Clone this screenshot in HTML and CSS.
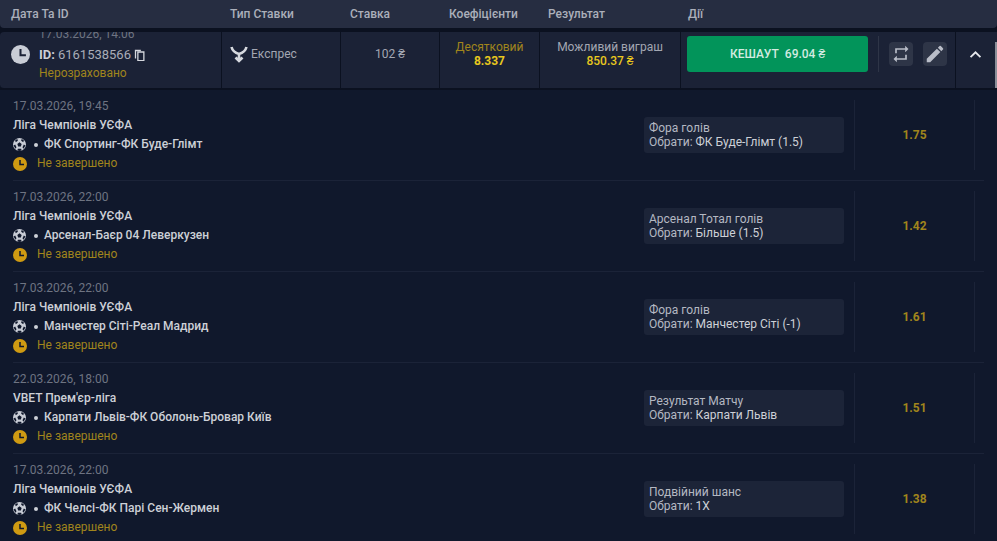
FILE: index.html
```html
<!DOCTYPE html>
<html lang="uk">
<head>
  <meta charset="UTF-8">
  <meta name="viewport" content="width=device-width, initial-scale=1.0">
  <title>Мої ставки</title>
  <link rel="stylesheet" href="styles.css">
</head>
<body>
  <svg class="sprites" width="0" height="0">
    <symbol id="clock" viewBox="0 0 28 28">
      <circle cx="14" cy="14" r="14" fill="currentColor"/>
      <path d="M14 6v9h8" fill="none" stroke="var(--hand)" stroke-width="3"/>
    </symbol>
    <symbol id="ball" viewBox="0 0 24 24">
      <circle cx="12" cy="12" r="12" fill="#c9cdd6"/>
      <path d="M12 8l4 3-1.500 4.500h-5L8 11zM4 4l4-2 1 3-4 3zM20 4l-4-2-1 3 4 3zM1 14l3-2 2.500 5-2 3zM23 14l-3-2-2.500 5 2 3zM9 20h6l1 3-4 1-4-1z" fill="#10182c"/>
    </symbol>
  </svg>

  <header class="table-head">
    <div class="col-date">Дата Та ID</div>
    <div class="col-type">Тип Ставки</div>
    <div class="col-stake">Ставка</div>
    <div class="col-odds">Коефіцієнти</div>
    <div class="col-result">Результат</div>
    <div class="col-actions">Дії</div>
  </header>

  <section class="summary">
    <div class="cell col-date date-cell">
      <svg class="summary-clock"><use href="#clock"/></svg>
      <div class="date-lines">
        <div class="muted">17.03.2026, 14:06</div>
        <div class="bet-id">
          <b>ID:</b> 6161538566
          <svg class="copy" viewBox="0 0 14 14"><path d="M1 1h7v1.500H2.500V11H1z" fill="#d5d8de"/><path d="M4.500 3.500h7v10h-7z" fill="none" stroke="#d5d8de" stroke-width="1.500"/></svg>
        </div>
        <div class="gold">Нерозраховано</div>
      </div>
    </div>
    <div class="cell col-type type-cell">
      <svg class="express" viewBox="0 0 18 18"><path d="M1.500 2c1 4 4 6 7.500 7 3.500-1 6.500-3 7.500-7M9 9v6M5.500 12.500L9 16l3.500-3.500" fill="none" stroke="#d5d8de" stroke-width="2.600"/></svg>
      <span>Експрес</span>
    </div>
    <div class="cell col-stake center muted-light">102 ₴</div>
    <div class="cell col-odds center stack">
      <div class="gold">Десятковий</div>
      <b class="yellow">8.337</b>
    </div>
    <div class="cell col-result center stack">
      <div class="muted-light">Можливий виграш</div>
      <div class="yellow medium">850.37 ₴</div>
    </div>
    <div class="cell col-actions action-cell">
      <button class="cashout">КЕШАУТ&nbsp; 69.04 ₴</button>
      <div class="action-sep"></div>
      <button class="icon-btn">
        <svg class="icon-repeat" viewBox="0 0 24 24"><path d="M7 7h10v3l4-4-4-4v3H5v6h2zM17 17H7v-3l-4 4 4 4v-3h12v-6h-2z" fill="#b9bdc8"/></svg>
      </button>
      <button class="icon-btn">
        <svg class="icon-edit" viewBox="0 0 24 24"><path d="M3 17.250V21h3.750L17.810 9.940l-3.750-3.750zM20.710 7.040a1 1 0 000-1.410l-2.340-2.340a1 1 0 00-1.410 0l-1.830 1.830 3.750 3.750z" fill="#b9bdc8"/></svg>
      </button>
    </div>
    <div class="toggle">
      <svg viewBox="0 0 14 10"><path d="M1.500 8L7 2.500 12.500 8" fill="none" stroke="#e6e8ec" stroke-width="2"/></svg>
    </div>
    <div class="scroll-thumb"></div>
  </section>

  <main class="events">
    <article class="event">
      <div class="event-info">
        <div class="muted">17.03.2026, 19:45</div>
        <div class="league">Ліга Чемпіонів УЄФА</div>
        <div class="match"><svg class="ball"><use href="#ball"/></svg><span class="dot"></span>ФК Спортинг-ФК Буде-Глімт</div>
        <div class="status"><svg class="status-clock"><use href="#clock"/></svg>Не завершено</div>
      </div>
      <div class="pick"><div>Фора голів</div><div>Обрати: <span class="pick-name">ФК Буде-Глімт (1.5)</span></div></div>
      <div class="event-odds">1.75</div>
    </article>
    <article class="event">
      <div class="event-info">
        <div class="muted">17.03.2026, 22:00</div>
        <div class="league">Ліга Чемпіонів УЄФА</div>
        <div class="match"><svg class="ball"><use href="#ball"/></svg><span class="dot"></span>Арсенал-Баєр 04 Леверкузен</div>
        <div class="status"><svg class="status-clock"><use href="#clock"/></svg>Не завершено</div>
      </div>
      <div class="pick"><div>Арсенал Тотал голів</div><div>Обрати: <span class="pick-name">Більше (1.5)</span></div></div>
      <div class="event-odds">1.42</div>
    </article>
    <article class="event">
      <div class="event-info">
        <div class="muted">17.03.2026, 22:00</div>
        <div class="league">Ліга Чемпіонів УЄФА</div>
        <div class="match"><svg class="ball"><use href="#ball"/></svg><span class="dot"></span>Манчестер Сіті-Реал Мадрид</div>
        <div class="status"><svg class="status-clock"><use href="#clock"/></svg>Не завершено</div>
      </div>
      <div class="pick"><div>Фора голів</div><div>Обрати: <span class="pick-name">Манчестер Сіті (-1)</span></div></div>
      <div class="event-odds">1.61</div>
    </article>
    <article class="event">
      <div class="event-info">
        <div class="muted">22.03.2026, 18:00</div>
        <div class="league">VBET Прем'єр-ліга</div>
        <div class="match"><svg class="ball"><use href="#ball"/></svg><span class="dot"></span>Карпати Львів-ФК Оболонь-Бровар Київ</div>
        <div class="status"><svg class="status-clock"><use href="#clock"/></svg>Не завершено</div>
      </div>
      <div class="pick"><div>Результат Матчу</div><div>Обрати: <span class="pick-name">Карпати Львів</span></div></div>
      <div class="event-odds">1.51</div>
    </article>
    <article class="event">
      <div class="event-info">
        <div class="muted">17.03.2026, 22:00</div>
        <div class="league">Ліга Чемпіонів УЄФА</div>
        <div class="match"><svg class="ball"><use href="#ball"/></svg><span class="dot"></span>ФК Челсі-ФК Парі Сен-Жермен</div>
        <div class="status"><svg class="status-clock"><use href="#clock"/></svg>Не завершено</div>
      </div>
      <div class="pick"><div>Подвійний шанс</div><div>Обрати: <span class="pick-name">1X</span></div></div>
      <div class="event-odds">1.38</div>
    </article>
  </main>
</body>
</html>
```

FILE: styles.css
```css
:root {
  --page-bg: #0b1120;
  --head-bg: #262d41;
  --row-bg: #1b2236;
  --list-bg: #10182c;
  --line: #1b2338;
  --text: #cdd0d7;
  --muted: #6e7482;
  --muted-light: #a3a7b2;
  --gold: #a0851c;
  --yellow: #e8c81e;
}
html, body {
  height: 100%;
}
body {
  margin: 0;
  height: 541px;
  overflow: hidden;
  background: var(--page-bg);
  color: var(--text);
  font-family: Roboto, "Liberation Sans", sans-serif;
  font-size: 12px;
}
.sprites {
  position: absolute;
}
.col-date { width: 222px; }
.col-type { width: 119px; }
.col-stake { width: 99px; }
.col-odds { width: 100px; }
.col-result { width: 141px; }
.col-actions { width: 275px; }

.table-head {
  display: flex;
  height: 28px;
  align-items: center;
  background: var(--head-bg);
  border-radius: 0 0 4px 4px;
  color: #abafba;
  font-weight: 500;
  line-height: 26px;
}
.table-head > div {
  box-sizing: border-box;
  padding-left: 8px;
}
.table-head .col-date {
  padding-left: 11px;
}
.table-head .col-stake, .table-head .col-odds {
  padding-left: 9px;
}
.table-head .col-actions {
  padding-left: 7px;
}
.summary {
  position: relative;
  display: flex;
  height: 56px;
  margin-top: 4px;
  overflow: hidden;
  background: var(--row-bg);
  border-bottom: 1px solid #0b1120;
  border-radius: 4px 0 0 4px;
}
.scroll-thumb {
  position: absolute;
  top: 10px;
  right: 0;
  bottom: 0;
  width: 2px;
  background: #8b8f99;
}
.cell {
  box-sizing: border-box;
  height: 56px;
  padding-bottom: 12px;
  border-right: 1px solid #0b1120;
  display: flex;
  align-items: center;
}
.center {
  justify-content: center;
}
.stack {
  flex-direction: column;
  text-align: center;
  line-height: 14.500px;
}
.date-cell {
  gap: 9px;
  padding-left: 11px;
}
.summary-clock {
  width: 19px;
  height: 19px;
  color: #c9cdd6;
  --hand: #1b2236;
}
.date-lines {
  line-height: 19.500px;
  margin-top: 1px;
  white-space: nowrap;
}
.bet-id {
  color: #a9adb8;
  font-size: 13px;
  display: flex;
  align-items: center;
  gap: 3px;
}
.bet-id b {
  color: var(--text);
  font-weight: 700;
}
.copy {
  width: 12px;
  height: 12px;
}
.muted {
  color: var(--muted);
}
.muted-light {
  color: var(--muted-light);
}
.gold {
  color: var(--gold);
}
.yellow {
  color: var(--yellow);
}
.medium {
  font-weight: 500;
}
.type-cell {
  gap: 3px;
  padding-left: 8px;
  color: var(--muted-light);
}
.express {
  width: 18px;
  height: 18px;
}
.action-cell {
  padding-left: 6px;
}
.cashout {
  flex: none;
  width: 181px;
  height: 36px;
  margin: 0 10px 0 0;
  border: 0;
  border-radius: 3px;
  background: #02945a;
  color: #d3ebe0;
  font: 500 12px Roboto, "Liberation Sans", sans-serif;
}
.action-sep {
  flex: none;
  width: 1px;
  height: 36px;
  margin-right: 10px;
  background: #2e3547;
}
.icon-btn {
  flex: none;
  display: flex;
  align-items: center;
  justify-content: center;
  width: 24px;
  height: 24px;
  margin: 0 10px 0 0;
  padding: 0;
  border: 0;
  border-radius: 4px;
  background: #2e3547;
}
.icon-repeat {
  width: 20px;
  height: 20px;
}
.icon-edit {
  width: 22px;
  height: 22px;
}
.toggle {
  flex: 1;
  display: flex;
  align-items: center;
  justify-content: center;
  padding: 0 2px 12px 0;
}
.toggle svg {
  width: 13px;
  height: 9px;
}
.events {
  background: var(--list-bg);
  margin-top: 1px;
  padding: 0 13px;
  height: 452px;
  overflow: hidden;
}
.event {
  box-sizing: border-box;
  display: flex;
  align-items: center;
  height: 91px;
  padding: 10px 0;
  border-bottom: 1px solid var(--line);
}
.event-info {
  width: 631px;
  line-height: 19px;
  white-space: nowrap;
}
.league {
  font-weight: 500;
  color: var(--text);
}
.match {
  display: flex;
  align-items: center;
  font-weight: 500;
}
.ball {
  width: 13px;
  height: 13px;
}
.dot {
  width: 4px;
  height: 4px;
  margin: 0 6px 0 8px;
  border-radius: 50%;
  background: var(--text);
}
.status {
  display: flex;
  align-items: center;
  gap: 10px;
  color: var(--gold);
}
.status-clock {
  width: 14px;
  height: 14px;
  color: #cf9a12;
  --hand: #10182c;
}
.pick {
  box-sizing: border-box;
  width: 200px;
  height: 36px;
  padding: 4px 5px;
  border-radius: 3px;
  background: #1c2438;
  color: #b4b8c2;
  line-height: 14px;
}
.pick-name {
  color: var(--text);
}
.event-odds {
  box-sizing: border-box;
  width: 121px;
  height: 70px;
  margin-left: 10px;
  border-left: 1px solid var(--line);
  border-right: 1px solid var(--line);
  display: flex;
  align-items: center;
  justify-content: center;
  color: var(--gold);
  font-weight: 700;
}
```
